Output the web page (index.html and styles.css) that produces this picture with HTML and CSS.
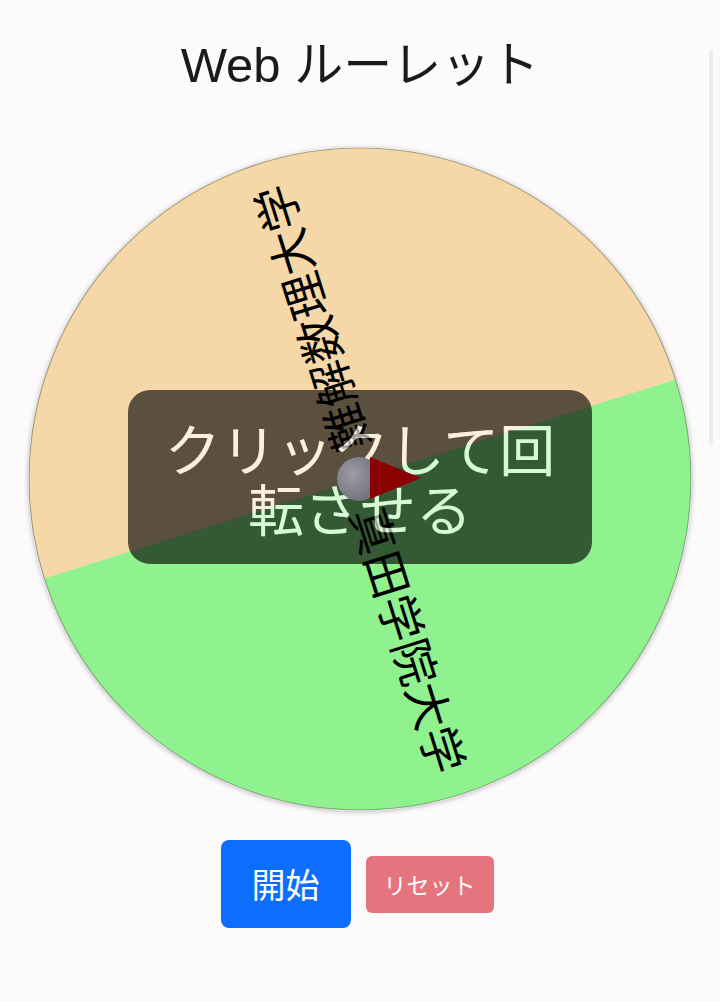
FILE: index.html
```html
<!DOCTYPE html>
<html lang="ja">
<head>
<meta charset="utf-8">
<title>Web ルーレット</title>
<link rel="stylesheet" href="styles.css">
</head>
<body>
<main class="page">
  <h1 class="title">Web ルーレット</h1>
  <div class="wheel-wrap">
    <svg class="wheel" viewBox="0 0 664 664" width="664" height="664">
      <circle cx="332" cy="332" r="331" fill="#8ff28e"/>
      <path d="M332 332 L647.7 232.5 A331 331 0 0 0 16.3 431.5 Z" fill="#f6d8a8"/>
      <circle cx="332" cy="332" r="331" fill="none" stroke="rgba(0,0,0,0.3)" stroke-width="1.2"/>
      <text class="seg-label" transform="translate(332 332) rotate(72.5)" x="30" y="0" dominant-baseline="central">真田学院大学</text>
      <text class="seg-label" transform="translate(332 332) rotate(-107.5)" x="30" y="0" dominant-baseline="central">難解数理大学</text>
    </svg>
    <div class="overlay">クリックして回転させる</div>
    <svg class="pointer" viewBox="0 0 664 664" width="664" height="664">
      <defs>
        <radialGradient id="hub" cx="0.35" cy="0.4" r="0.75">
          <stop offset="0" stop-color="#9c9ca6"/>
          <stop offset="1" stop-color="#6a6a74"/>
        </radialGradient>
      </defs>
      <circle cx="331" cy="332" r="22" fill="url(#hub)"/>
      <polygon points="342,310 393,331 342,352" fill="#8b0000"/>
    </svg>
  </div>
  <div class="controls">
    <button class="btn btn-start">開始</button>
    <button class="btn btn-reset" disabled>リセット</button>
  </div>
</main>
<div class="scroll-indicator"></div>
</body>
</html>
```
FILE: styles.css
```css
html, body {
  margin: 0;
  padding: 0;
  background: #fdfafb;
}

body {
  font-family: "Liberation Sans", "Noto Sans CJK JP", sans-serif;
  color: #222;
}

.page {
  display: flex;
  flex-direction: column;
  align-items: center;
}

.title {
  margin: 36px 0 53px;
  font-size: 49px;
  line-height: 58px;
  font-weight: 400;
  color: #1a1a1a;
}

.wheel-wrap {
  position: relative;
  width: 664px;
  height: 664px;
  border-radius: 50%;
  box-shadow: 0 1px 5px rgba(0, 0, 0, 0.25);
}

.wheel {
  display: block;
}

.seg-label {
  font-family: "Noto Sans CJK JP", sans-serif;
  font-size: 46px;
  fill: #000;
}

.overlay {
  position: absolute;
  left: 100px;
  top: 243px;
  width: 404px;
  padding: 27px 30px;
  border-radius: 22px;
  background: #000;
  color: #fff;
  opacity: 0.63;
  will-change: transform;
  font-family: "Noto Sans CJK JP", sans-serif;
  font-size: 56px;
  line-height: 60px;
  text-align: center;
}

.pointer {
  position: absolute;
  left: 0;
  top: 0;
}

.controls {
  display: flex;
  align-items: center;
  gap: 15px;
  margin-top: 29px;
  padding-right: 6px;
}

.btn {
  font-family: "Noto Sans CJK JP", sans-serif;
  color: #fff;
  border: none;
  margin: 0;
}

.btn-start {
  background: #0d6efd;
  font-size: 34px;
  line-height: 52px;
  padding: 18px 31px;
  border-radius: 8px;
}

.btn-reset {
  background: #dc3545;
  opacity: 0.68;
  font-size: 23px;
  line-height: 33px;
  padding: 12px 18px;
  border-radius: 6px;
}

.scroll-indicator {
  position: fixed;
  right: 7px;
  top: 50px;
  width: 4px;
  height: 395px;
  border-radius: 2px;
  background: #ececec;
}
```
